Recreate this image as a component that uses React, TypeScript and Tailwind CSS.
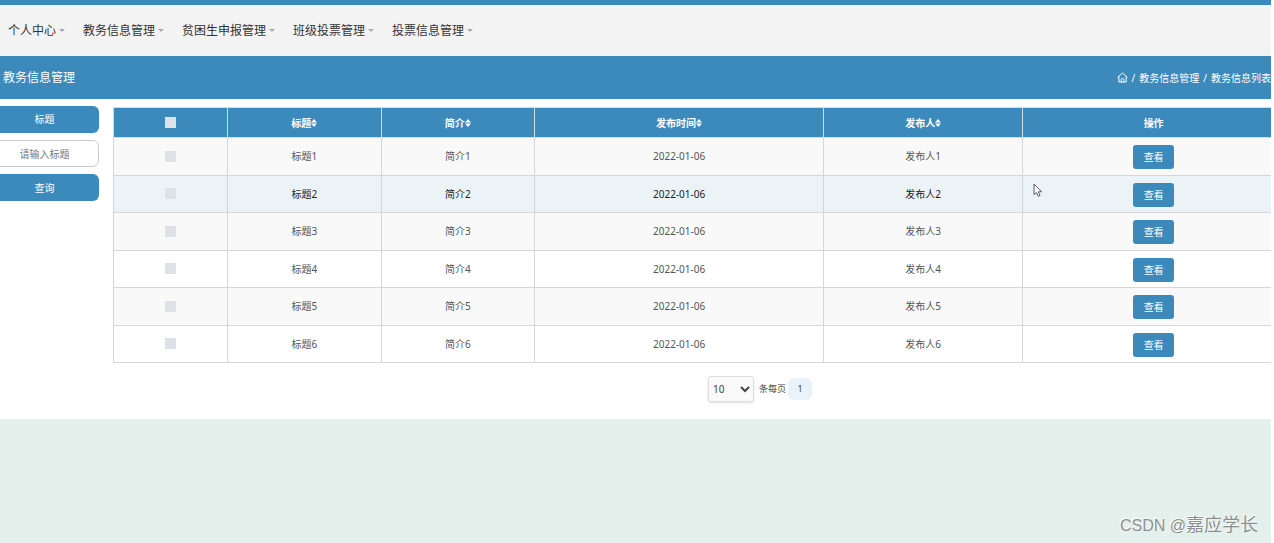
import React, { useState } from 'react';

const NAV_ITEMS = [
  { label: '个人中心', href: '#center' },
  { label: '教务信息管理', href: '#academic' },
  { label: '贫困生申报管理', href: '#aid' },
  { label: '班级投票管理', href: '#class-vote' },
  { label: '投票信息管理', href: '#votes' },
];

const COLUMNS = [
  { label: '标题', width: 'w-[13.1%]' },
  { label: '简介', width: 'w-[13.1%]' },
  { label: '发布时间', width: 'w-[24.7%]' },
  { label: '发布人', width: 'w-[17%]' },
];

const ROWS = [1, 2, 3, 4, 5, 6].map((n) => ({
  id: n,
  title: `标题${n}`,
  intro: `简介${n}`,
  date: '2022-01-06',
  author: `发布人${n}`,
}));

const ACTIVE_ROW = 2;

function SortIcon() {
  return (
    <svg className="h-2 w-[6px] shrink-0" viewBox="0 0 6 8" fill="currentColor" aria-hidden>
      <path d="M3 0L6 3.4H0z" />
      <path d="M3 8L6 4.6H0z" />
    </svg>
  );
}

function HomeIcon() {
  return (
    <svg className="h-[11px] w-[11px]" viewBox="0 0 11 11" fill="none" stroke="currentColor" strokeLinejoin="round" strokeLinecap="round" aria-hidden>
      <path d="M0.8 5.2L5.5 1L10.2 5.2" />
      <path d="M1.9 4.6V10H9.1V4.6" />
      <path d="M4.2 10V6.8H6.8V10" strokeWidth="0.8" />
    </svg>
  );
}

function Pointer() {
  return (
    <svg className="pointer-events-none absolute top-[7px] left-[10px] h-[15px] w-[10px]" viewBox="0 0 10 15" aria-hidden>
      <path
        d="M1 1V11.6L3.4 9.5L5.2 13.3L7 12.5L5.3 8.8H8.6z"
        fill="#fff"
        stroke="#555b60"
        strokeWidth="1"
        strokeLinejoin="round"
      />
    </svg>
  );
}

function Check({ label, checked, onChange }: { label: string; checked: boolean; onChange: () => void }) {
  return (
    <input
      type="checkbox"
      aria-label={label}
      checked={checked}
      onChange={onChange}
      className="block mx-auto h-[11px] w-[11px] appearance-none bg-[#dee2e6] checked:bg-[#3c8abc]"
    />
  );
}

export default function App() {
  const [selected, setSelected] = useState<number[]>([]);
  const [keyword, setKeyword] = useState('');
  const [pageSize, setPageSize] = useState('10');

  const toggle = (id: number) =>
    setSelected((ids) => (ids.includes(id) ? ids.filter((i) => i !== id) : [...ids, id]));

  const toggleAll = () =>
    setSelected((ids) => (ids.length === ROWS.length ? [] : ROWS.map((r) => r.id)));

  return (
    <div className="relative min-h-screen overflow-hidden bg-white pr-[3px] font-['Noto_Sans','Noto_Sans_CJK_SC',sans-serif] text-[10px] leading-4 text-[#555]">
      <div className="flex min-h-screen flex-col bg-[#e4f0ec]">
        <header className="border-t-[5px] border-[#3c8abc] bg-[#f3f3f3]">
          <nav className="flex h-[51px] items-center gap-[18px] pl-2 text-xs text-[#333]">
            {NAV_ITEMS.map((item) => (
              <a key={item.href} href={item.href} className="flex items-center gap-[3px]">
                {item.label}
                <svg className="h-[3px] w-[6px]" viewBox="0 0 6 3" fill="#aaa" aria-hidden>
                  <path d="M0 0H6L3 3z" />
                </svg>
              </a>
            ))}
          </nav>
        </header>

        {/* Title bar */}
        <div className="flex h-[43px] items-center justify-between bg-[#3c8abc] pl-[3px] text-white">
          <h1 className="text-xs">教务信息管理</h1>
          <div className="flex items-center gap-1 whitespace-nowrap">
            <a href="#home" aria-label="首页">
              <HomeIcon />
            </a>
            <span>/</span>
            <a href="#academic">教务信息管理</a>
            <span>/</span>
            <span>教务信息列表</span>
          </div>
        </div>

        <main className="flex gap-[14px] overflow-hidden bg-white pt-2 pb-[17px]">
          {/* Search */}
          <form className="-mt-px flex w-[99px] shrink-0 flex-col gap-[7px] text-center" onSubmit={(e) => e.preventDefault()}>
            <label htmlFor="keyword" className="-ml-[10px] h-[27px] rounded-md bg-[#3c8abc] leading-[27px] text-white">
              标题
            </label>
            <input
              id="keyword"
              value={keyword}
              onChange={(e) => setKeyword(e.target.value)}
              placeholder="请输入标题"
              className="-ml-[10px] h-[27px] rounded-md border border-[#ccc] text-center placeholder:text-[#777]"
            />
            <button type="submit" className="-ml-[10px] h-[27px] rounded-md bg-[#3c8abc] text-white">
              查询
            </button>
          </form>

          <div className="min-w-0 flex-1">
            <table className="h-[256px] w-[calc(100%+14px)] table-fixed border-collapse text-center">
              <thead>
                <tr className="h-[30px] bg-[#3c8abc] text-white">
                  <th className="w-[9.75%] border border-[#d5dadd]">
                    <Check label="全选" checked={selected.length === ROWS.length} onChange={toggleAll} />
                  </th>
                  {COLUMNS.map((col) => (
                    <th key={col.label} className={`border border-[#d5dadd] ${col.width}`}>
                      <button type="button" className="inline-flex items-center">
                        {col.label}
                        <SortIcon />
                      </button>
                    </th>
                  ))}
                  <th className="border border-[#d5dadd]">操作</th>
                </tr>
              </thead>
              <tbody>
                {ROWS.map((row) => (
                  <tr
                    key={row.id}
                    className={
                      row.id === ACTIVE_ROW
                        ? 'bg-[#ebf3f7] text-[#222]'
                        : row.id % 2
                          ? 'bg-[#f9f9f9]'
                          : 'bg-white'
                    }
                  >
                    <td className="border border-[#d6d6d6]">
                      <Check label={row.title} checked={selected.includes(row.id)} onChange={() => toggle(row.id)} />
                    </td>
                    <td className="border border-[#d6d6d6]">{row.title}</td>
                    <td className="border border-[#d6d6d6]">{row.intro}</td>
                    <td className="border border-[#d6d6d6]">{row.date}</td>
                    <td className="border border-[#d6d6d6]">{row.author}</td>
                    <td className="relative border border-[#d6d6d6]">
                      <button type="button" className="mt-[2px] h-6 w-[41px] rounded-[3px] bg-[#3c8abc] align-middle text-white">
                        查看
                      </button>
                      {row.id === ACTIVE_ROW && <Pointer />}
                    </td>
                  </tr>
                ))}
              </tbody>
            </table>

            {/* Pagination */}
            <div className="mt-[13px] ml-[136px] flex items-center justify-center text-[9px] text-[#444]">
              <select
                aria-label="条每页"
                value={pageSize}
                onChange={(e) => setPageSize(e.target.value)}
                className="h-[26px] w-[46px] rounded-[3px] border border-[#ddd] bg-[#fafafa] text-[10px] shadow-sm"
              >
                <option>10</option>
                <option>25</option>
                <option>50</option>
              </select>
              <span className="ml-[5px]">条每页</span>
              <button type="button" className="ml-[2px] h-[22px] w-6 rounded-md bg-[#e9f2fa]">
                1
              </button>
            </div>
          </div>
        </main>
      </div>

      <div className="absolute right-4 bottom-[5px] text-[18px] leading-6 font-['Liberation_Sans','Noto_Sans_CJK_SC',sans-serif] text-[#8b908e] [text-shadow:-1px_-1px_0_#fff]">
        <span className="text-base">CSDN @</span>嘉应学长
      </div>
    </div>
  );
}
